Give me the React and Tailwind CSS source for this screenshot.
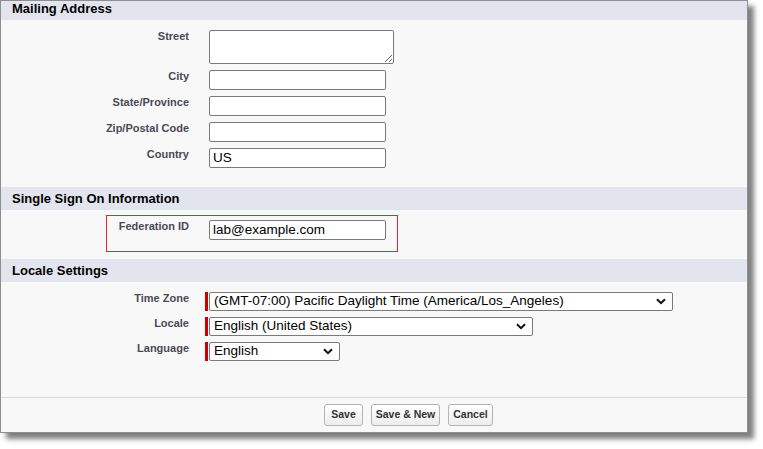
import React from 'react';

const font = "font-['Liberation_Sans',Arial,sans-serif]";

const Chevron = () => (
  <svg width="10" height="7" viewBox="0 0 10 7" className="shrink-0">
    <path d="M1 1.2 L5 5.2 L9 1.2" fill="none" stroke="#111" strokeWidth="2" />
  </svg>
);

const SectionHeader = ({ title, h = 'h-[23px]', pad = '' }) => (
  <div className={`${h} ${pad} bg-[#e3e5ee] flex items-center pl-[11px] text-[13px] font-bold text-black`}>
    {title}
  </div>
);

const Label = ({ children, w = 'w-[188px]' }) => (
  <div className={`${w} shrink-0 text-right text-[11px] leading-[13px] font-bold text-[#4a4a56]`}>
    {children}
  </div>
);

const TextInput = ({ value = '', w = 'w-[177px]' }) => (
  <div className={`${w} h-[20px] bg-white border border-[#7a7a7a] rounded-[2px] px-[3px] flex items-center text-[13.5px] text-black`}>
    {value}
  </div>
);

const Select = ({ value, w }) => (
  <div className={`${w} h-[19px] bg-white border border-[#7a7a7a] rounded-[2px] pl-[4px] pr-[6px] flex items-center justify-between text-[13.5px] text-black`}>
    <span className="whitespace-nowrap">{value}</span>
    <Chevron />
  </div>
);

const FieldRow = ({ label, children }) => (
  <div className="flex">
    <Label>{label}</Label>
    <div className="ml-[20px]">{children}</div>
  </div>
);

const RequiredRow = ({ label, children }) => (
  <div className="flex">
    <Label>{label}</Label>
    <div className="w-[20px] flex justify-end">
      <div className="w-[3px] h-[19px] bg-[#c00] mr-[1px]"></div>
    </div>
    {children}
  </div>
);

const Button = ({ children, w }) => (
  <button className={`${w} h-[22px] flex items-center justify-center border border-[#b5b5b5] rounded-[3px] bg-gradient-to-b from-white to-[#ededed] text-[10.5px] font-bold text-[#333]`}>
    {children}
  </button>
);

export default function App() {
  return (
    <div className={`w-[763px] h-[449px] bg-white ${font}`}>
      <div className="w-[748px] h-[433px] border border-[#8e8e8e] bg-[#f8f8f8] flex flex-col shadow-[6px_6px_5px_rgba(0,0,0,0.5)]">
        {/* Mailing Address */}
        <SectionHeader title="Mailing Address" h="h-[19px]" pad="pb-[3px]" />
        <div className="h-[167px] pt-[10px] flex flex-col gap-[6px]">
          <FieldRow label="Street">
            <textarea className="block w-[185px] h-[34px] bg-white border border-[#7a7a7a] rounded-[2px] resize-y" />
          </FieldRow>
          <FieldRow label="City"><TextInput /></FieldRow>
          <FieldRow label="State/Province"><TextInput /></FieldRow>
          <FieldRow label="Zip/Postal Code"><TextInput /></FieldRow>
          <FieldRow label="Country"><TextInput value="US" /></FieldRow>
        </div>

        {/* Single Sign On */}
        <SectionHeader title="Single Sign On Information" />
        <div className="h-[49px] pt-[5px]">
          <div className="ml-[105px] w-[292px] h-[37px] border border-[#e3262c] pt-[4px] flex">
            <Label w="w-[82px]">Federation ID</Label>
            <div className="ml-[20px]"><TextInput value="lab@example.com" /></div>
          </div>
        </div>

        {/* Locale Settings */}
        <SectionHeader title="Locale Settings" />
        <div className="h-[116px] pt-[10px] flex flex-col gap-[6px] border-b border-[#dadada]">
          <RequiredRow label="Time Zone">
            <Select w="w-[464px]" value="(GMT-07:00) Pacific Daylight Time (America/Los_Angeles)" />
          </RequiredRow>
          <RequiredRow label="Locale">
            <Select w="w-[324px]" value="English (United States)" />
          </RequiredRow>
          <RequiredRow label="Language">
            <Select w="w-[131px]" value="English" />
          </RequiredRow>
        </div>

        {/* Buttons */}
        <div className="flex-1 pt-[6px] pl-[323px] flex gap-[8px]">
          <Button w="w-[39px]">Save</Button>
          <Button w="w-[69px]">Save &amp; New</Button>
          <Button w="w-[45px]">Cancel</Button>
        </div>
      </div>
    </div>
  );
}
